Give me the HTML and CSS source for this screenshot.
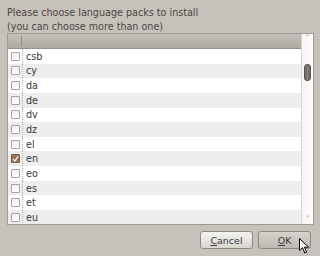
FILE: index.html
```html
<!doctype html>
<html lang="en">
	<head>
		<meta charset="UTF-8">
		<title>Language packs</title>
		<link rel="stylesheet" href="styles.css">
	</head>

	<body>
		<div class="dialog">
			<p class="prompt">Please choose language packs to install<br>(you can choose more than one)</p>

			<div class="listbox">
				<div class="list">
					<div class="header">
						<span class="col-check"></span>
						<span class="col-name"></span>
					</div>

					<div class="rows">
						<label class="row"><span class="box"></span><span class="name">csb</span></label>
						<label class="row"><span class="box"></span><span class="name">cy</span></label>
						<label class="row"><span class="box"></span><span class="name">da</span></label>
						<label class="row"><span class="box"></span><span class="name">de</span></label>
						<label class="row"><span class="box"></span><span class="name">dv</span></label>
						<label class="row"><span class="box"></span><span class="name">dz</span></label>
						<label class="row"><span class="box"></span><span class="name">el</span></label>
						<label class="row"><span class="box checked">
							<svg width="8" height="8" viewBox="0 0 8 8"><path d="M1.2 4.2 L3.2 6.4 L7 0.8" fill="none" stroke="#fff" stroke-width="1.3"/></svg>
						</span><span class="name">en</span></label>
						<label class="row"><span class="box"></span><span class="name">eo</span></label>
						<label class="row"><span class="box"></span><span class="name">es</span></label>
						<label class="row"><span class="box"></span><span class="name">et</span></label>
						<label class="row"><span class="box"></span><span class="name">eu</span></label>
					</div>
				</div>

				<div class="scrollbar">
					<span class="arrow">&#708;</span>
					<div class="track">
						<div class="thumb"></div>
					</div>
					<span class="arrow">&#709;</span>
				</div>
			</div>

			<div class="buttons">
				<button class="btn"><u>C</u>ancel</button>
				<button class="btn btn-hover"><u>O</u>K</button>
			</div>

			<!-- mouse pointer sitting on the OK button -->
			<svg class="cursor" width="11" height="16" viewBox="0 0 11 16">
				<path d="M0.5 0.5 L0.5 12.5 L3.5 9.8 L5.8 15 L7.6 14.2 L5.4 9.2 L9.5 9.2 Z" fill="#fff" stroke="#000" stroke-width="1"/>
			</svg>
		</div>
	</body>
</html>
```

FILE: styles.css
```css
* {
	padding: 0;
	margin: 0;
	box-sizing: border-box;
}
body {
	background-color: #c6c2bb;
	color: #3a3a3a;
	font-family: "DejaVu Sans", sans-serif;
	font-size: 9.6px;
	width: 320px;
	height: 256px;
	overflow: hidden;
}
.dialog {
	position: relative;
	padding: 6px 6px 0 7px;
}
.prompt {
	line-height: 14px;
	color: #4a4742;
	height: 27px;
}
.listbox {
	display: flex;
	height: 192px;
	border: 1px solid #9e9a93;
	background-color: #fff;
}
.list {
	flex: 1;
	display: flex;
	flex-direction: column;
	overflow: hidden;
}
.header {
	display: flex;
	height: 15px;
	flex-shrink: 0;
	background: linear-gradient(#c4c1ba, #aeaaa2);
	border-bottom: 1px solid #97938b;
}
.col-check {
	width: 14px;
	border-right: 1px solid #8f8b83;
	margin: 2px 0;
}
.rows {
	flex: 1;
	overflow: hidden;
}
.row {
	display: flex;
	align-items: center;
	height: 14.65px;
}
.row:nth-child(even) {
	background-color: #ededed;
}
.box {
	width: 9px;
	height: 9px;
	margin: 0 2px 0 3px;
	border: 1px solid #a7a49e;
	border-radius: 1px;
	background: linear-gradient(#f2f2f2, #fff);
	display: flex;
	align-items: center;
	justify-content: center;
}
.box.checked {
	background: #9b7458;
	border-color: #7a5a43;
}
.name {
	border-left: 1px dotted #b4b4b4;
	padding-left: 3px;
	height: 100%;
	display: flex;
	align-items: center;
}
.scrollbar {
	width: 12px;
	display: flex;
	flex-direction: column;
	align-items: center;
	background: linear-gradient(90deg, #f4f4f2, #fdfdfd);
	border-left: 1px solid #d8d6d2;
}
.arrow {
	font-size: 7px;
	line-height: 9px;
	height: 9px;
	color: #6e6b66;
}
.track {
	flex: 1;
	width: 100%;
	padding: 21px 2px 0 2px;
}
.thumb {
	height: 17px;
	border-radius: 3px;
	background: linear-gradient(90deg, #6a6560, #857f78, #6a6560);
	border: 1px solid #5a5550;
}
.buttons {
	display: flex;
	justify-content: flex-end;
	gap: 5px;
	padding: 6px 3px 0 0;
}
.btn {
	width: 53px;
	height: 18px;
	font-family: "DejaVu Sans", sans-serif;
	font-size: 9.5px;
	color: #3a3a3a;
	border: 1px solid #8e8a83;
	border-radius: 3px;
	background: linear-gradient(#f4f3f1, #d9d6d0);
}
.btn-hover {
	background: linear-gradient(#d6d3cd, #bdb9b2);
}
.cursor {
	position: absolute;
	left: 299px;
	top: 238px;
}
```
